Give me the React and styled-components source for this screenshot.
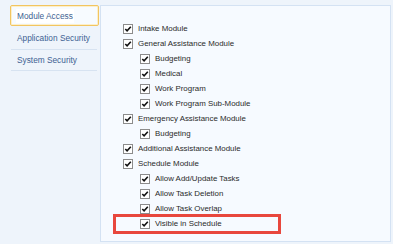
import React from "react";
import styled, { createGlobalStyle } from "styled-components";

const GlobalStyle = createGlobalStyle`
  html, body {
    margin: 0;
    padding: 0;
    background: #eef4fb;
  }
  body {
    font-family: "Liberation Sans", Arial, sans-serif;
  }
`;

const tabs = [
  { label: "Module Access", active: true },
  { label: "Application Security" },
  { label: "System Security" },
];

const modules = [
  { label: "Intake Module", level: 0 },
  { label: "General Assistance Module", level: 0 },
  { label: "Budgeting", level: 1 },
  { label: "Medical", level: 1 },
  { label: "Work Program", level: 1 },
  { label: "Work Program Sub-Module", level: 1 },
  { label: "Emergency Assistance Module", level: 0 },
  { label: "Budgeting", level: 1 },
  { label: "Additional Assistance Module", level: 0 },
  { label: "Schedule Module", level: 0 },
  { label: "Allow Add/Update Tasks", level: 1 },
  { label: "Allow Task Deletion", level: 1 },
  { label: "Allow Task Overlap", level: 1 },
  { label: "Visible in Schedule", level: 1, marked: true },
];

function CheckBox() {
  return (
    <Box>
      <svg width="10" height="10" viewBox="0 0 10 10">
        <rect x="0.5" y="0.5" width="9" height="9" fill="#fff" stroke="#8c8c8c" />
        <path d="M2.3 5 L4.1 6.9 L7.8 2.8" fill="none" stroke="#111" strokeWidth="1.6" />
      </svg>
    </Box>
  );
}

export default function App() {
  return (
    <>
      <GlobalStyle />
      <Screen>
        <Sidebar>
          {tabs.map((t) => (
            <Tab key={t.label} $active={t.active}>
              <TabLabel $active={t.active}>{t.label}</TabLabel>
            </Tab>
          ))}
        </Sidebar>
        <Panel>
          <List>
            {modules.map((m, i) => (
              <Row key={i} $level={m.level} $marked={m.marked}>
                <CheckBox />
                <Label>{m.label}</Label>
              </Row>
            ))}
          </List>
        </Panel>
      </Screen>
    </>
  );
}

const Screen = styled.div`
  display: flex;
  align-items: flex-start;
  padding: 5px 0 0 10px;
  width: 393px;
  height: 244px;
  box-sizing: border-box;
`;

const Sidebar = styled.div`
  width: 88px;
  display: flex;
  flex-direction: column;
  flex-shrink: 0;
`;

const Tab = styled.div`
  height: ${(p) => (p.$active ? "21px" : "22px")};
  display: flex;
  align-items: center;
  padding-left: 5px;
  box-sizing: border-box;
  margin-left: 1px;
  margin-right: 1px;
  border-bottom: 1px solid #d7e3f1;
  ${(p) =>
    p.$active &&
    `
    margin: 0 -1px 0 0;
    padding-left: 5px;
    background: #f7fbff;
    border: 1px solid #f2c560;
    border-radius: 2px;
    box-shadow: inset 0 0 0 1px #fcefcb;
  `}
  &:nth-child(2) {
    height: 24px;
  }
  &:nth-child(3) {
    height: 21px;
  }
`;

const TabLabel = styled.span`
  font-size: 8.3px;
  color: #3d5f92;
  padding: 2px 1px;
  white-space: nowrap;
  background: ${(p) => (p.$active ? "#ffffff" : "transparent")};
`;

const Panel = styled.div`
  margin-left: 2px;
  width: 291px;
  height: 237px;
  box-sizing: border-box;
  background: #f6faff;
  border: 1px solid #d4e2f3;
`;

const List = styled.div`
  display: flex;
  flex-direction: column;
  padding-top: 15px;
`;

const Row = styled.div`
  position: relative;
  height: 15px;
  display: flex;
  align-items: center;
  padding-left: ${(p) => 22 + p.$level * 17}px;
  ${(p) =>
    p.$marked &&
    `
    &::after {
      content: "";
      position: absolute;
      left: 12px;
      top: -2px;
      width: 168px;
      height: 20px;
      box-sizing: border-box;
      border: 3px solid #e8473d;
    }
  `}
`;

const Box = styled.span`
  display: inline-flex;
  width: 10px;
  height: 10px;
  flex-shrink: 0;
`;

const Label = styled.span`
  margin-left: 5px;
  font-size: 7.9px;
  color: #2a2a2a;
  white-space: nowrap;
`;
